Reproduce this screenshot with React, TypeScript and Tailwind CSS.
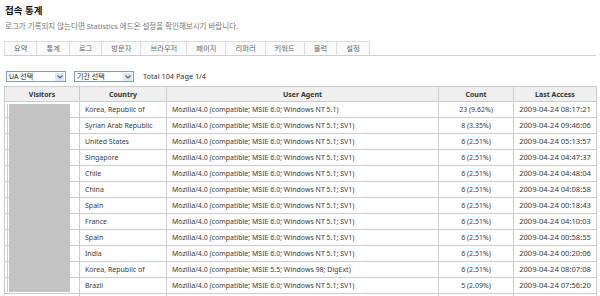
import React from "react";

const rows: [string, string, string, string][] = [
  ["Korea, Republic of", "Mozilla/4.0 (compatible; MSIE 6.0; Windows NT 5.1)", "23 (9.62%)", "2009-04-24 08:17:21"],
  ["Syrian Arab Republic", "Mozilla/4.0 (compatible; MSIE 6.0; Windows NT 5.1; SV1)", "8 (3.35%)", "2009-04-24 09:46:06"],
  ["United States", "Mozilla/4.0 (compatible; MSIE 6.0; Windows NT 5.1; SV1)", "6 (2.51%)", "2009-04-24 05:13:57"],
  ["Singapore", "Mozilla/4.0 (compatible; MSIE 6.0; Windows NT 5.1; SV1)", "6 (2.51%)", "2009-04-24 04:47:37"],
  ["Chile", "Mozilla/4.0 (compatible; MSIE 6.0; Windows NT 5.1; SV1)", "6 (2.51%)", "2009-04-24 04:48:04"],
  ["China", "Mozilla/4.0 (compatible; MSIE 6.0; Windows NT 5.1; SV1)", "6 (2.51%)", "2009-04-24 04:08:58"],
  ["Spain", "Mozilla/4.0 (compatible; MSIE 6.0; Windows NT 5.1; SV1)", "6 (2.51%)", "2009-04-24 00:18:43"],
  ["France", "Mozilla/4.0 (compatible; MSIE 6.0; Windows NT 5.1; SV1)", "6 (2.51%)", "2009-04-24 04:10:03"],
  ["Spain", "Mozilla/4.0 (compatible; MSIE 6.0; Windows NT 5.1; SV1)", "6 (2.51%)", "2009-04-24 00:58:55"],
  ["India", "Mozilla/4.0 (compatible; MSIE 6.0; Windows NT 5.1; SV1)", "6 (2.51%)", "2009-04-24 00:20:06"],
  ["Korea, Republic of", "Mozilla/4.0 (compatible; MSIE 5.5; Windows 98; DigExt)", "6 (2.51%)", "2009-04-24 08:07:08"],
  ["Brazil", "Mozilla/4.0 (compatible; MSIE 6.0; Windows NT 5.1; SV1)", "5 (2.09%)", "2009-04-24 07:56:20"],
  ["", "", "", ""],
];

const tabs = ["요약", "통계", "로그", "방문자", "브라우저", "페이지", "리퍼러", "키워드", "블럭", "설정"];

function Select({ label, w }: { label: string; w: string }) {
  return (
    <div className={`flex h-[11px] items-center justify-between border border-[#7f9db9] bg-white pl-[2px] pr-[1px] ${w}`}>
      <span className="text-[7px] leading-none text-[#222]">{label}</span>
      <span className="flex h-[8px] w-[9px] items-center justify-center rounded-[1px] bg-[#dde6f5]">
        <svg width="6" height="4" viewBox="0 0 6 4">
          <path d="M0.5 0.5 L3 3 L5.5 0.5" fill="none" stroke="#4d6185" strokeWidth="1.2" />
        </svg>
      </span>
    </div>
  );
}

export default function App() {
  return (
    <div
      className="h-[296px] w-[600px] overflow-hidden bg-white px-[4px] pt-[4px] text-[#333]"
      style={{ fontFamily: '"Noto Sans", "Noto Sans CJK KR", sans-serif' }}
    >
      <div className="pl-[1px] text-[9.5px] font-bold leading-[14px] text-[#111]">접속 통계</div>
      <div className="mt-[3px] pl-[1px] text-[7.5px] leading-[11px] text-[#777]">
        로그가 기록되지 않는다면 Statistics 애드온 설정을 확인해보시기 바랍니다.
      </div>
      <div className="mt-[9px] flex h-[15px] w-[592px] border-b border-[#cfcfcf]">
        {tabs.map((t) => (
          <div
            key={t}
            className="flex items-center border border-b-0 border-r-0 border-[#dcdcdc] bg-[#fbfbfb] px-[9px] text-[7.3px] leading-none text-[#666] last:border-r"
          >
            {t}
          </div>
        ))}
      </div>
      <div className="mt-[15px] flex items-center pl-[2px]">
        <Select label="UA 선택" w="w-[60px]" />
        <div className="ml-[8px]">
          <Select label="기간 선택" w="w-[60px]" />
        </div>
        <span className="ml-[9px] text-[7.3px] leading-none text-[#333]">Total 104 Page 1/4</span>
      </div>
      <div className="relative mt-[4px]">
        <table className="w-[592px] table-fixed border-collapse text-[7px] leading-none">
          <colgroup>
            <col className="w-[75px]" />
            <col className="w-[87px]" />
            <col className="w-[272px]" />
            <col className="w-[75px]" />
            <col className="w-[83px]" />
          </colgroup>
          <thead>
            <tr className="h-[15px] bg-[#efefef] font-bold text-[#333]">
              <th className="border border-[#cccccc]">Visitors</th>
              <th className="border border-[#cccccc]">Country</th>
              <th className="border border-[#cccccc]">User Agent</th>
              <th className="border border-[#cccccc]">Count</th>
              <th className="border border-[#cccccc]">Last Access</th>
            </tr>
          </thead>
          <tbody>
            {rows.map((r, i) => (
              <tr key={i} className="h-[16px] text-[#3a3a3a]">
                <td className="border border-[#cccccc]"></td>
                <td className="truncate border border-[#cccccc] pl-[5px]">{r[0]}</td>
                <td className="truncate border border-[#cccccc] pl-[5px]">{r[1]}</td>
                <td className="border border-[#cccccc] text-center">{r[2]}</td>
                <td className="border border-[#cccccc] text-center text-[7.6px]">{r[3]}</td>
              </tr>
            ))}
          </tbody>
        </table>
        <div className="absolute left-[3px] top-[18px] h-[188px] w-[63px] border-l border-[#cccccc] pl-[1px]">
          <div className="h-full w-full bg-[#c3c3c3]" />
        </div>
      </div>
    </div>
  );
}
